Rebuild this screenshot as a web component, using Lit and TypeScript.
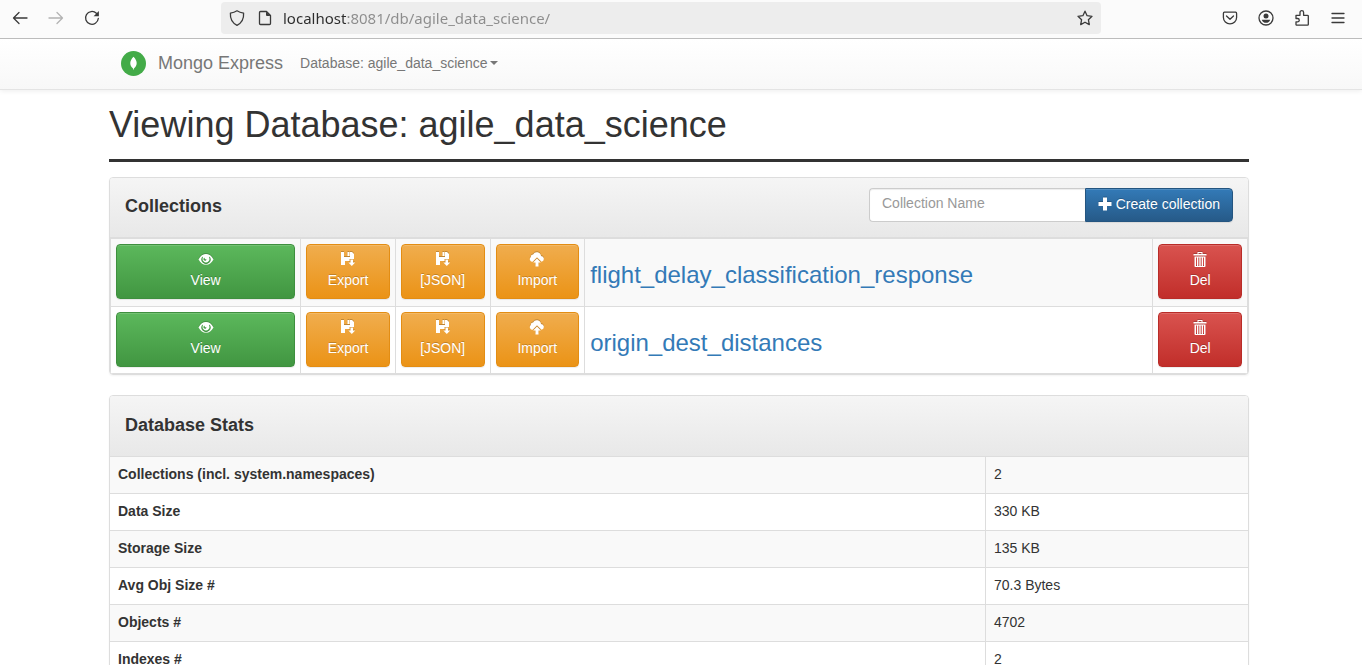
import { LitElement, html, css, svg } from "lit";
import { customElement, property, state } from "lit/decorators.js";

const sans = css`"Liberation Sans", Arial, Helvetica, sans-serif`;

const glyphs: Record<string, unknown> = {
  eye: svg`<path fill-rule="evenodd" d="M-.500 7.500C1.500 3.800 4 2 7 2S12.500 3.800 14.500 7.500C12.500 11 10 12.800 7 12.800S1.500 11 -.500 7.500ZM3.400 4.600A4.600 4.600 0 1 0 10.600 4.600L10 5.500A3.400 3.400 0 1 1 4 5.500ZM5.500 5.600A1.600 1.600 0 1 0 7.600 7.600A2 2 0 0 1 5.500 5.600Z"/>`,
  save: svg`<path fill-rule="evenodd" d="M0 0H3V5H9V0H11L13 2V7H8.500V9H4V13H0ZM6.500 0H8.500V4H6.500Z"/><path d="M9.500 7.500H12V10.500H14.200L10.800 14L7.400 10.500H9.500Z"/>`,
  cloud: svg`<path d="M3 9.800A2.800 2.800 0 0 1 .800 4.900A2.300 2.300 0 0 1 3.100 2.500A4.200 4.200 0 0 1 11 3.900A3 3 0 0 1 11.600 9.800L7 5.200L2.600 9.800Z"/><path d="M7 6.600L10.800 10.500H8.500V14.500H5.500V10.500H3.200Z"/>`,
  trash: svg`<path fill-rule="evenodd" d="M4.500 0H9.500V2H13.500V3.500H.500V2H4.500ZM5.500 1V2H8.500V1ZM1.500 4.500H12.500V14A1 1 0 0 1 11.500 15H2.500A1 1 0 0 1 1.500 14ZM3 5.500V14H4V5.500ZM5.300 5.500V14H6.300V5.500ZM7.700 5.500V14H8.700V5.500ZM10 5.500V14H11V5.500Z"/>`,
  plus: svg`<path d="M5 .5H9V5H13.500V9H9V13.500H5V9H.500V5H5Z"/>`,
};

@customElement("glyph-icon")
class GlyphIcon extends LitElement {
  static styles = css`
    :host { display: inline-block; width: 14px; height: 14px; }
    .glyph { display: block; overflow: visible; fill: currentColor; filter: drop-shadow(0 -1px 0 rgba(0, 0, 0, 0.2)); }
  `;
  @property() name = "plus";
  render() {
    return html`<svg class="glyph" width="14" height="14" viewBox="0 0 14 14" aria-hidden="true">${glyphs[this.name]}</svg>`;
  }
}

const chromeIcons: Record<string, unknown> = {
  back: svg`<path d="M15 8H1.500M7 2.500L1.500 8L7 13.500"/>`,
  forward: svg`<path d="M1 8H14.500M9 2.500L14.500 8L9 13.500"/>`,
  reload: svg`<path d="M14.300 8.500A6.400 6.400 0 1 1 12.400 3.300"/><path class="solid" d="M14.900 1V6.300H9.600Z"/>`,
  shield: svg`<path d="M8 .800C9.800 2 12 2.800 14.600 3.100C15 9 12.500 13 8 15.300C3.500 13 1 9 1.400 3.100C4 2.800 6.200 2 8 .800Z"/>`,
  page: svg`<path d="M3.500 1.500H9.500L13.500 5.500V13.500A1 1 0 0 1 12.500 14.500H3.500A1 1 0 0 1 2.500 13.500V2.500A1 1 0 0 1 3.500 1.500Z"/><path class="solid" d="M9 1.500L13.500 6H10A1 1 0 0 1 9 5Z"/>`,
  star: svg`<path d="M8 1.200L10.100 5.700L15 6.300L11.400 9.700L12.300 14.600L8 12.200L3.700 14.600L4.600 9.700L1 6.300L5.900 5.700Z"/>`,
  pocket: svg`<path d="M2.500 2.200H13.500A1.300 1.300 0 0 1 14.600 3.500V7.500A6.600 6.300 0 0 1 1.400 7.500V3.500A1.300 1.300 0 0 1 2.500 2.200Z"/><path d="M4.500 6L8 9.300L11.500 6"/>`,
  account: svg`<circle cx="8" cy="8" r="7"/><circle class="solid" cx="8" cy="6" r="2.500"/><path class="solid" d="M3.800 9.700H12.200C11.800 11.800 10 12.800 8 12.800S4.200 11.800 3.800 9.700Z"/>`,
  extension: svg`<path d="M2 5.300H6V2.500A1.800 1.800 0 0 1 9.600 2.500V5.300H13.500A.800 .800 0 0 1 14.300 6.100V14.400A.800 .800 0 0 1 13.500 15.200H2.800A.800 .800 0 0 1 2 14.400V11.800H3.600A1.600 1.600 0 0 0 3.600 8.500H2Z"/>`,
  menu: svg`<path d="M2 3.500H14M2 8H14M2 12.500H14"/>`,
};

@customElement("chrome-icon")
class ChromeIcon extends LitElement {
  static styles = css`
    :host { display: block; width: 16px; height: 16px; }
    .icon { display: block; overflow: visible; fill: none; stroke: currentColor; stroke-width: 1.3; stroke-linecap: round; stroke-linejoin: round; }
    .solid { fill: currentColor; stroke: none; }
  `;
  @property() name = "menu";
  render() {
    return html`<svg class="icon" width="16" height="16" viewBox="0 0 16 16" aria-hidden="true">${chromeIcons[this.name]}</svg>`;
  }
}

@customElement("browser-toolbar")
class BrowserToolbar extends LitElement {
  static styles = css`
    :host { display: flex; justify-content: space-between; align-items: flex-start; box-sizing: border-box; height: 39px; flex: none; padding: 2px 16px 0 12px; background: #fbfbfb; border-bottom: 1px solid #bcbcbc; color: #3a3a3a; }
    .group { display: flex; align-items: center; gap: 20px; height: 32px; }
    .tool { display: block; padding: 0; border: 0; background: none; color: inherit; }
    .tool:disabled { color: #b3b3b3; }
    .address { flex: 0 1 880px; box-sizing: border-box; display: flex; align-items: center; gap: 12px; height: 32px; padding: 0 8px; border-radius: 4px; background: #ededed; }
    .url { flex: 1; min-width: 0; margin-left: -2px; padding: 0; border: 0; outline: 0; font: 15px/24px "Noto Sans", "Open Sans", sans-serif; color: transparent; background: linear-gradient(to right, #2c2c2c 64px, #8c8c8c 64px) text; -webkit-background-clip: text; }
  `;
  render() {
    return html`
      <div class="group">
        <button class="tool" aria-label="Back"><chrome-icon name="back"></chrome-icon></button>
        <button class="tool" aria-label="Forward" disabled><chrome-icon name="forward"></chrome-icon></button>
        <button class="tool" aria-label="Reload"><chrome-icon name="reload"></chrome-icon></button>
      </div>
      <div class="address">
        <chrome-icon name="shield"></chrome-icon>
        <chrome-icon name="page"></chrome-icon>
        <input class="url" type="text" aria-label="Address" spellcheck="false" value="localhost:8081/db/agile_data_science/" />
        <button class="tool" aria-label="Bookmark this page"><chrome-icon name="star"></chrome-icon></button>
      </div>
      <div class="group">
        <button class="tool" aria-label="Save to Pocket"><chrome-icon name="pocket"></chrome-icon></button>
        <button class="tool" aria-label="Account"><chrome-icon name="account"></chrome-icon></button>
        <button class="tool" aria-label="Extensions"><chrome-icon name="extension"></chrome-icon></button>
        <button class="tool" aria-label="Menu"><chrome-icon name="menu"></chrome-icon></button>
      </div>`;
  }
}

@customElement("app-root")
class AppRoot extends LitElement {
  static styles = css`
    :host { display: flex; flex-direction: column; height: 100vh; background: #fff; color: #333; font: 14px/20px ${sans}; }
    .page { flex: 1; min-height: 0; overflow-y: auto; scrollbar-width: none; }
    .container { box-sizing: border-box; max-width: 1170px; margin: 0 auto; padding: 0 17px 0 13px; }

    .navbar { background: linear-gradient(to bottom, #fff, #f8f8f8); border-bottom: 1px solid #e4e4e4; box-shadow: 0 1px 5px rgba(0, 0, 0, 0.075); }
    .nav-row { display: flex; align-items: center; height: 50px; padding-bottom: 2px; color: #777; }
    .nav-link { color: inherit; text-decoration: none; text-shadow: 0 1px 0 rgba(255, 255, 255, 0.25); }
    .brand { display: flex; align-items: center; gap: 12px; margin: 0 17px 0 12px; font-size: 18px; }
    .dropdown { display: flex; align-items: center; gap: 2px; padding: 0; border: 0; background: none; font: inherit; }
    .caret { border: 4px solid transparent; border-top-color: currentColor; border-bottom: 0; }

    .title { margin: 0; padding: 15px 0 14px; border-bottom: 3px solid #333; font-size: 36px; line-height: 40px; font-weight: 400; }
    .panel { margin: 15px 0 20px; border: 1px solid #ddd; border-radius: 4px; overflow: hidden; box-shadow: 0 1px 2px rgba(0, 0, 0, 0.05); }
    .heading { box-sizing: border-box; min-height: 60px; display: flex; align-items: center; justify-content: space-between; padding: 10px 15px 15px; background: linear-gradient(to bottom, #f5f5f5, #e8e8e8); }
    .ruled { border-bottom: 1px solid #ddd; }
    .panel-title { margin: 0; padding-top: 2px; font-size: 18px; line-height: 20px; font-weight: 700; }

    .create { display: flex; width: 364px; }
    .field { flex: 1; min-width: 0; box-sizing: border-box; height: 34px; padding: 4px 12px 8px; border: 1px solid #ccc; border-right: 0; border-radius: 4px 0 0 4px; background: #fff; color: #555; font: inherit; box-shadow: inset 0 1px 1px rgba(0, 0, 0, 0.075); }
    .field::placeholder { color: #999; opacity: 1; }

    .btn { box-sizing: border-box; border: 1px solid; border-radius: 4px; padding: 5px 12px 7px; color: #fff; font: inherit; text-align: center; text-decoration: none; text-shadow: 0 -1px 0 rgba(0, 0, 0, 0.2); box-shadow: inset 0 1px 0 rgba(255, 255, 255, 0.15), 0 1px 1px rgba(0, 0, 0, 0.075); cursor: pointer; }
    .stacked { display: flex; flex-direction: column; align-items: center; gap: 4px; width: 100%; height: 55px; padding: 7px 12px; }
    .joined { display: flex; align-items: center; gap: 4px; height: 34px; border-radius: 0 4px 4px 0; }
    .primary { background: linear-gradient(to bottom, #337ab7, #265a88); border-color: #245580; }
    .success { background: linear-gradient(to bottom, #5cb85c, #419641); border-color: #3e8f3e; }
    .warning { background: linear-gradient(to bottom, #f0ad4e, #eb9316); border-color: #e38d13; }
    .danger { background: linear-gradient(to bottom, #d9534f, #c12e2a); border-color: #b92c28; }

    .table { width: 100%; border-spacing: 0; }
    .table tr:nth-child(odd) { background: #f9f9f9; }
    .collections { table-layout: fixed; border: solid #ddd; border-width: 1px 1px 0; }
    .collections td { padding: 5px 5px 7px; border-bottom: 1px solid #ddd; vertical-align: top; }
    .collections tr:last-child td { padding-bottom: 6px; }
    .collections td + td { border-left: 1px solid #ddd; }
    .view-col { width: 16.66%; }
    .action-col { width: 8.33%; }
    .name { font-size: 24px; line-height: 28px; }
    .name-cell { overflow: hidden; }
    .collections .name-cell { padding-top: 22px; }
    .link { color: #337ab7; text-decoration: none; }

    .stats th, .stats td { box-sizing: border-box; padding: 7px 8px 9px; border-top: 1px solid #ddd; text-align: left; vertical-align: top; }
    .stats th { font-weight: 700; }
    .stats td { width: 263px; border-left: 1px solid #ddd; }
  `;

  @state() collections = ["flight_delay_classification_response", "origin_dest_distances"];
  @state() stats = [
    ["Collections (incl. system.namespaces)", "2"],
    ["Data Size", "330 KB"],
    ["Storage Size", "135 KB"],
    ["Avg Obj Size #", "70.3 Bytes"],
    ["Objects #", "4702"],
    ["Indexes #", "2"],
  ];

  collectionRow(name: string) {
    return html`
      <tr>
        <td><a class="btn stacked success" href="#${name}"><glyph-icon name="eye"></glyph-icon>View</a></td>
        <td><a class="btn stacked warning" href="#export-${name}"><glyph-icon name="save"></glyph-icon>Export</a></td>
        <td><a class="btn stacked warning" href="#json-${name}"><glyph-icon name="save"></glyph-icon>[JSON]</a></td>
        <td><button class="btn stacked warning"><glyph-icon name="cloud"></glyph-icon>Import</button></td>
        <td class="name-cell"><a class="link name" href="#${name}">${name}</a></td>
        <td><button class="btn stacked danger"><glyph-icon name="trash"></glyph-icon>Del</button></td>
      </tr>`;
  }

  render() {
    return html`
      <browser-toolbar></browser-toolbar>
      <div class="page">
        <nav class="navbar">
          <div class="container nav-row">
            <a class="nav-link brand" href="#home">
              <svg width="25" height="25" viewBox="0 0 25 25" aria-hidden="true">
                <circle cx="12.500" cy="12.500" r="12.500" fill="#43ab48"/>
                <path fill="#fff" d="M12.500 5.800C16.700 10 16.700 14.500 12.900 17.600V18.500H12.100V17.600C8.300 14.500 8.300 10 12.500 5.800Z"/>
              </svg>
              Mongo Express
            </a>
            <button class="nav-link dropdown">Database: agile_data_science<span class="caret"></span></button>
          </div>
        </nav>
        <main class="container">
          <h1 class="title">Viewing Database: agile_data_science</h1>
          <section class="panel">
            <div class="heading ruled">
              <h2 class="panel-title">Collections</h2>
              <form class="create" @submit=${(e: Event) => e.preventDefault()}>
                <input class="field" type="text" aria-label="Collection Name" placeholder="Collection Name" />
                <button class="btn joined primary" type="submit"><glyph-icon name="plus"></glyph-icon>Create collection</button>
              </form>
            </div>
            <table class="table collections">
              <colgroup>
                <col class="view-col" /><col class="action-col" /><col class="action-col" /><col class="action-col" /><col /><col class="action-col" />
              </colgroup>
              <tbody>${this.collections.map((name) => this.collectionRow(name))}</tbody>
            </table>
          </section>
          <section class="panel">
            <div class="heading"><h2 class="panel-title">Database Stats</h2></div>
            <table class="table stats">
              <tbody>${this.stats.map(([label, value]) => html`<tr><th scope="row">${label}</th><td>${value}</td></tr>`)}</tbody>
            </table>
          </section>
        </main>
      </div>`;
  }
}
